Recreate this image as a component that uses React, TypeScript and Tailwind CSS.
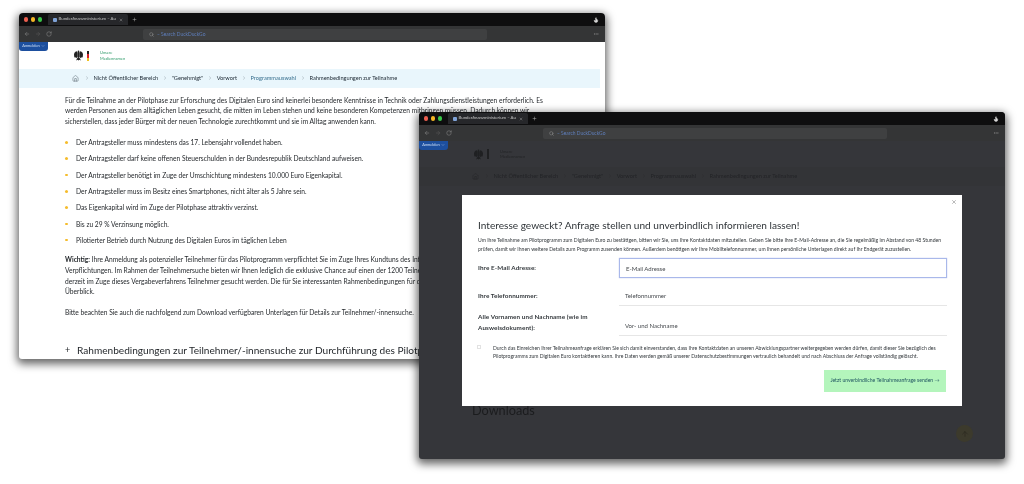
import { ArrowUp, ChevronDown, ChevronRight, Ellipsis, Flame, Home, Plus, RotateCw, Search, X, ArrowLeft, ArrowRight } from "lucide-react";

const crumbs = ["Nicht Öffentlicher Bereich", "\"Genehmigt\"", "Vorwort", "Programmauswahl", "Rahmenbedingungen zur Teilnahme"];

const bullets = [
  "Der Antragsteller muss mindestens das 17. Lebensjahr vollendet haben.",
  "Der Antragsteller darf keine offenen Steuerschulden in der Bundesrepublik Deutschland aufweisen.",
  "Der Antragsteller benötigt im Zuge der Umschichtung mindestens 10.000 Euro Eigenkapital.",
  "Der Antragsteller muss im Besitz eines Smartphones, nicht älter als 5 Jahre sein.",
  "Das Eigenkapital wird im Zuge der Pilotphase attraktiv verzinst.",
  "Bis zu 29 % Verzinsung möglich.",
  "Pilotierter Betrieb durch Nutzung des Digitalen Euros im täglichen Leben",
];

function BrowserBar() {
  return (
    <>
      <div className="flex h-[13px] shrink-0 items-center bg-[#0e0e0f] pl-[4px] pr-[6px] text-[#c9c9c9]">
        <span className="ml-[0.500px] size-[4.500px] rounded-full bg-[#ee5f50]" />
        <span className="ml-[2.500px] size-[4.500px] rounded-full bg-[#f5b625]" />
        <span className="ml-[2.500px] size-[4.500px] rounded-full bg-[#39c748]" />
        <div className="ml-[5.500px] flex h-[11px] w-[80px] items-center gap-[2px] rounded-t-[2px] bg-[#26272a] px-[5px]">
          <span className="size-[4px] shrink-0 rounded-[1px] bg-[#7fa3d8]" />
          <span className="flex-1 whitespace-nowrap text-[4.300px] leading-none">Bundesfinanzministerium – Au</span>
          <X className="size-[4px] shrink-0" />
        </div>
        <Plus className="ml-[4px] size-[5px]" />
        <Flame className="ml-auto size-[6px] fill-[#d8d8d8] text-[#d8d8d8]" />
      </div>
      <div className="flex h-[16px] shrink-0 items-center bg-[#343536] pl-[5px] pr-[6px] text-[#8c8c8c]">
        <ArrowLeft className="size-[6px]" />
        <ArrowRight className="ml-[5px] size-[6px] text-[#5d5d5d]" />
        <RotateCw className="ml-[5px] size-[6px]" />
        <div className="ml-[91px] flex h-[11px] w-[344px] items-center gap-[3px] rounded-[2px] bg-[#3f4041] px-[6px]">
          <Search className="size-[5px] text-[#a0a0a0]" />
          <span className="text-[4.900px] leading-none text-[#5f7fbd]">– Search DuckDuckGo</span>
        </div>
        <Ellipsis className="ml-auto size-[6px]" />
      </div>
    </>
  );
}

function LoginTab() {
  return (
    <div className="absolute left-0 top-[29px] flex h-[8.500px] w-[29px] items-center justify-center gap-[1px] rounded-b-[3px] bg-[#1d4f9e] text-[3.900px] leading-none text-[#cfe0f7]">
      Anmelden
      <ChevronDown className="size-[4px]" />
    </div>
  );
}

function Eagle({ color }: { color: string }) {
  return (
    <svg viewBox="0 0 20 24" className="h-[11px] w-[9px]">
      <g fill={color}>
        <circle cx="10" cy="3" r="2" />
        <rect x="8" y="4" width="4" height="13" rx="1.500" />
        <path d="M8 6 5 2 3 4 1 6 0 10l.5 5 1.500 2 2-1 1 2 3-3z" />
        <path d="M12 6l3-4 2 2 2 2 1 4-.5 5-1.500 2-2-1-1 2-3-3z" />
        <path d="M9 16 6 20l-1 3 3-1.500L10 23l2-1.500 3 1.500-1-3-3-4z" />
      </g>
    </svg>
  );
}

function Breadcrumb({ dim }: { dim?: boolean }) {
  return (
    <nav
      className={`flex h-[19px] shrink-0 items-center gap-[3.750px] pl-[53px] text-[5.650px] ${
        dim ? "bg-[#333437] text-[#232427]" : "mr-[5px] bg-[#e9f6fc] text-[#1c2833]"
      }`}
    >
      <Home className="mr-[1px] size-[7px] stroke-[1.2]" />
      {crumbs.map((c) => (
        <div key={c} className="flex items-center gap-[3.750px]">
          <ChevronRight className="size-[6px] stroke-[1.2] opacity-70" />
          <span className={c === "Programmauswahl" && !dim ? "text-[#39708f]" : ""}>{c}</span>
        </div>
      ))}
    </nav>
  );
}

function PageWindow() {
  return (
    <section className="absolute left-[19px] top-[13px] flex h-[346px] w-[586px] flex-col overflow-hidden rounded-t-[4px] rounded-b-[3px] bg-white shadow-[0_3px_8px_2px_rgba(0,0,0,0.6)]">
      <BrowserBar />
      <LoginTab />
      <div className="flex h-[27px] shrink-0 items-center pl-[55px]">
        <Eagle color="#222" />
        <span className="ml-[4px] h-[10px] w-[2px] bg-[linear-gradient(#222_33%,#d8232a_33%,#d8232a_66%,#f0c020_66%)]" />
        <div className="ml-[11px] text-[4px] leading-[5.500px] text-[#2c9a68]">
          Unsere
          <br />
          Mediennamen
        </div>
      </div>
      <Breadcrumb />
      <main className="whitespace-nowrap pl-[46px] pt-[6.600px] text-[6.650px] leading-[10.700px] text-[#1f2327]">
        <p>
          Für die Teilnahme an der Pilotphase zur Erforschung des Digitalen Euro sind keinerlei besondere Kenntnisse in Technik oder Zahlungsdienstleistungen erforderlich. Es
          <br />
          werden Personen aus dem alltäglichen Leben gesucht, die mitten im Leben stehen und keine besonderen Kompetenzen mitbringen müssen. Dadurch können wir
          <br />
          sicherstellen, dass jeder Bürger mit der neuen Technologie zurechtkommt und sie im Alltag anwenden kann.
        </p>
        <ul className="mt-[7.600px]">
          {bullets.map((b) => (
            <li key={b} className="flex h-[16.300px] items-center">
              <span className="mr-[8.500px] size-[2.500px] rounded-full bg-[#f5bc2c]" />
              {b}
            </li>
          ))}
        </ul>
        <p className="mt-[6px]">
          <b className="font-bold">Wichtig:</b> Ihre Anmeldung als potenzieller Teilnehmer für das Pilotprogramm verpflichtet Sie im Zuge Ihres Kundtuns des Interesses zu keinerlei
          <br />
          Verpflichtungen. Im Rahmen der Teilnehmersuche bieten wir Ihnen lediglich die exklusive Chance auf einen der 1200 Teilnehmerplätze, für die
          <br />
          derzeit im Zuge dieses Vergabeverfahrens Teilnehmer gesucht werden. Die für Sie interessanten Rahmenbedingungen für die Teilnahme im
          <br />
          Überblick.
        </p>
        <p className="mt-[10px]">Bitte beachten Sie auch die nachfolgend zum Download verfügbaren Unterlagen für Details zur Teilnehmer/-innensuche.</p>
        <h2 className="mt-[25.600px] flex items-center text-[10.100px] leading-[14px] text-[#1f2327]">
          <span className="w-[12px] text-[9px]">+</span>
          Rahmenbedingungen zur Teilnehmer/-innensuche zur Durchführung des Pilotprogramms
        </h2>
      </main>
    </section>
  );
}

function Row({ label, placeholder, active, tall }: { label: React.ReactNode; placeholder: string; active?: boolean; tall?: boolean }) {
  return (
    <div className={`grid grid-cols-[141px_328px] ${tall ? "mt-[-2px] items-start" : "items-center"}`}>
      <label className="text-[6.300px] font-bold leading-[10.500px] tracking-[0.1px] text-[#33383c]">{label}</label>
      <input
        readOnly
        placeholder={placeholder}
        className={`h-[20px] w-full px-[6px] text-[6px] outline-none placeholder:text-[#45494d] ${tall ? "mt-[4px] " : ""}${
          active ? "border border-[#a9b8ea] shadow-[0_0_1px_#a9b8ea]" : "border-b border-[#e6e6e6]"
        }`}
      />
    </div>
  );
}

function ModalWindow() {
  return (
    <section className="absolute left-[419px] top-[112px] flex h-[347px] w-[586px] flex-col overflow-hidden rounded-t-[4px] rounded-b-[3px] bg-[#35363a] shadow-[0_3px_8px_2px_rgba(0,0,0,0.6)]">
      <BrowserBar />
      <LoginTab />
      <div className="flex h-[26px] shrink-0 items-center pl-[55px]">
        <Eagle color="#1f2022" />
        <span className="ml-[4px] h-[10px] w-[2px] bg-[#1f2022]" />
        <div className="ml-[11px] text-[4px] leading-[5.500px] text-[#232426]">
          Unsere
          <br />
          Mediennamen
        </div>
      </div>
      <Breadcrumb dim />
      <h2 className="mt-[214px] pl-[53px] text-[12.700px] leading-[20px] text-[#1b1c1e]">Downloads</h2>

      <div className="absolute bottom-[17px] right-[32px] flex size-[17px] items-center justify-center rounded-full bg-[#3c3a2c] text-[#2a2920]">
        <ArrowUp className="size-[8px]" />
      </div>

      <div className="absolute left-[43px] top-[83px] flex h-[211px] w-[500px] flex-col whitespace-nowrap bg-white pl-[16px] text-[#33383c]">
        <X className="absolute right-[5px] top-[4px] size-[6px] text-[#777]" />
        <h1 className="mt-[22px] text-[10.100px] leading-[16px] text-[#2f3438]">Interesse geweckt? Anfrage stellen und unverbindlich informieren lassen!</h1>
        <p className="mt-[3px] text-[5.100px] leading-[8.500px]">
          Um Ihre Teilnahme am Pilotprogramm zum Digitalen Euro zu bestätigen, bitten wir Sie, uns Ihre Kontaktdaten mitzuteilen. Geben Sie bitte Ihre E-Mail-Adresse an, die Sie regelmäßig im Abstand von 48 Stunden
          <br />
          prüfen, damit wir Ihnen weitere Details zum Programm zusenden können. Außerdem benötigen wir Ihre Mobiltelefonnummer, um Ihnen persönliche Unterlagen direkt auf Ihr Endgerät zuzustellen.
        </p>
        <form className="mt-[5px] flex flex-col gap-[8px]">
          <Row label="Ihre E-Mail Adresse:" placeholder="E-Mail Adresse" active />
          <Row label="Ihre Telefonnummer:" placeholder="Telefonnummer" />
          <Row
            tall
            label={
              <>
                Alle Vornamen und Nachname (wie im
                <br />
                Ausweisdokument):
              </>
            }
            placeholder="Vor- und Nachname"
          />
        </form>
        <div className="mt-[7.500px] flex">
          <span className="ml-[-1px] mt-[1px] size-[4px] border border-[#e2e2e2]" />
          <p className="ml-[12px] text-[5.050px] leading-[8.800px]">
            Durch das Einreichen Ihrer Teilnahmeanfrage erklären Sie sich damit einverstanden, dass Ihre Kontaktdaten an unseren Abwicklungspartner weitergegeben werden dürfen, damit dieser Sie bezüglich des
            <br />
            Pilotprogramms zum Digitalen Euro kontaktieren kann. Ihre Daten werden gemäß unserer Datenschutzbestimmungen vertraulich behandelt und nach Abschluss der Anfrage vollständig gelöscht.
          </p>
        </div>
        <button className="ml-[346px] mt-[8.500px] flex h-[22px] w-[122px] items-center justify-center bg-[#b4f5bc] text-[5.100px] text-[#1f5560]">
          Jetzt unverbindliche Teilnahmeanfrage senden →
        </button>
      </div>
    </section>
  );
}

export default function App() {
  return (
    <div className="relative h-[484px] w-[1024px] overflow-hidden bg-white blur-[0.3px] [font-family:Lato,sans-serif]">
      <PageWindow />
      <ModalWindow />
    </div>
  );
}
